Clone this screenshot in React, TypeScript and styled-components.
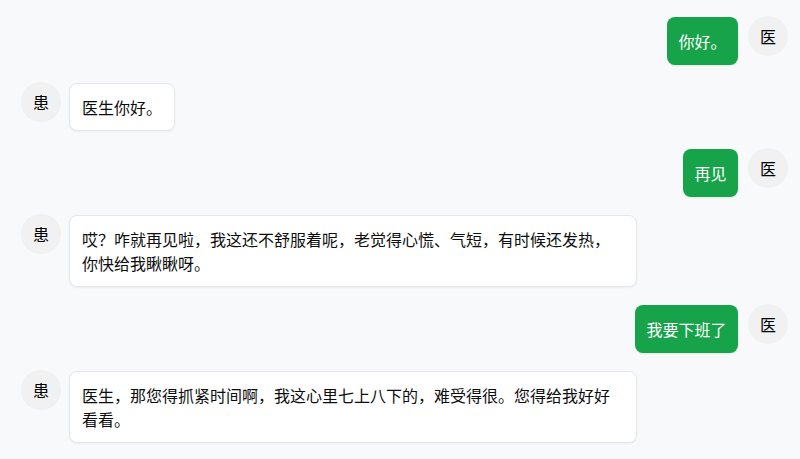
import styled, { createGlobalStyle } from "styled-components";

const GlobalStyle = createGlobalStyle`
  html, body {
    margin: 0;
    padding: 0;
    background: #f8f9fb;
  }
  body {
    font-family: "Noto Sans CJK SC", "Noto Sans", sans-serif;
  }
`;

const ChatRoot = styled.div`
  width: 800px;
  height: 459px;
  box-sizing: border-box;
  padding: 16px 12px 0 21px;
  display: flex;
  flex-direction: column;
  gap: 17px;
  overflow: hidden;
  background: #f8f9fb;
`;

const MessageRow = styled.div<{ $mine: boolean }>`
  display: flex;
  flex-direction: ${(p) => (p.$mine ? "row-reverse" : "row")};
  align-items: flex-start;
  gap: ${(p) => (p.$mine ? "10px" : "8px")};
`;

const Avatar = styled.div`
  flex: none;
  width: 40px;
  height: 40px;
  border-radius: 50%;
  background: #f1f1f2;
  color: #000;
  display: flex;
  align-items: center;
  justify-content: center;
  font-size: 16px;
`;

const Bubble = styled.div<{ $mine: boolean }>`
  margin-top: 1px;
  max-width: 542px;
  padding: ${(p) => (p.$mine ? "12px 11.5px" : "11px 12px")};
  border-radius: 8px;
  font-size: 16px;
  line-height: 24px;
  border: ${(p) => (p.$mine ? "none" : "1px solid #e6e7ea")};
  background: ${(p) => (p.$mine ? "#16a34a" : "#ffffff")};
  color: ${(p) => (p.$mine ? "#ffffff" : "#0d0d0d")};
  box-shadow: ${(p) => (p.$mine ? "0 1px 2px rgba(0,0,0,0.08)" : "0 1px 2px rgba(0,0,0,0.05)")};
`;

const messages = [
  { mine: true, text: "你好。" },
  { mine: false, text: "医生你好。" },
  { mine: true, text: "再见" },
  {
    mine: false,
    text: "哎？咋就再见啦，我这还不舒服着呢，老觉得心慌、气短，有时候还发热，你快给我瞅瞅呀。",
  },
  { mine: true, text: "我要下班了" },
  {
    mine: false,
    text: "医生，那您得抓紧时间啊，我这心里七上八下的，难受得很。您得给我好好看看。",
  },
];

export default function App() {
  return (
    <>
      <GlobalStyle />
      <ChatRoot>
        {messages.map((m, i) => (
          <MessageRow key={i} $mine={m.mine}>
            <Avatar>{m.mine ? "医" : "患"}</Avatar>
            <Bubble $mine={m.mine}>{m.text}</Bubble>
          </MessageRow>
        ))}
      </ChatRoot>
    </>
  );
}
